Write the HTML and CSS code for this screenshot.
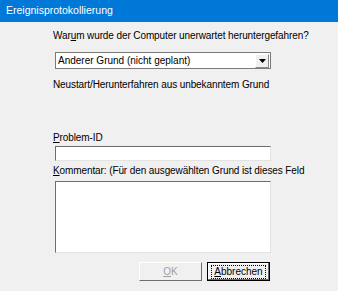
FILE: index.html
```html
<!DOCTYPE html>
<html lang="de">
<head>
    <meta charset="UTF-8">
    <title>Ereignisprotokollierung</title>
    <link rel="stylesheet" href="styles.css">
</head>
<body>
    <div class="window">
        <div class="titlebar">Ereignisprotokollierung</div>

        <div class="content">
            <div class="label question">War<u>u</u>m wurde der Computer unerwartet heruntergefahren?</div>

            <div class="combo">
                <span class="combo-text">Anderer Grund (nicht geplant)</span>
                <span class="combo-button">
                    <svg width="7" height="4" viewBox="0 0 7 4"><path d="M0 0h7L3.5 4z" fill="#000"/></svg>
                </span>
            </div>

            <div class="label info">Neustart/Herunterfahren aus unbekanntem Grund</div>

            <div class="label problem-label"><u>P</u>roblem-ID</div>
            <div class="field id-field"></div>

            <div class="label comment-label"><u>K</u>ommentar: (Für den ausgewählten Grund ist dieses Feld</div>
            <div class="field memo"></div>

            <div class="buttons">
                <div class="btn disabled"><u>O</u>K</div>
                <div class="btn default"><span class="focus"><u>A</u>bbrechen</span></div>
            </div>
        </div>
    </div>
</body>
</html>
```

FILE: styles.css
```css
body {
    margin: 0;
    background-color: #f0f0f0;
    font-family: "Liberation Sans", Arial, sans-serif;
    font-size: 10px;
    color: #000;
}
.window {
    width: 338px;
    height: 291px;
    overflow: hidden;
}
.titlebar {
    height: 22px;
    line-height: 21px;
    padding-left: 6px;
    background-color: #0078d7;
    color: #fff;
    font-size: 10.5px;
}
.content {
    padding: 7px 0 0 55px;
}
.label {
    line-height: 14px;
    white-space: nowrap;
    margin-left: -2px;
    letter-spacing: -0.1px;
}
.label u {
    text-decoration-thickness: 1px;
}
.combo {
    margin-top: 9px;
    width: 214px;
    height: 15px;
    border: 1px solid #7a7a7a;
    background-color: #fff;
    display: flex;
    align-items: center;
    justify-content: space-between;
}
.combo-text {
    padding-left: 2px;
}
.combo-button {
    width: 12px;
    height: 12px;
    margin-right: 1px;
    border: 1px solid;
    border-color: #fff #8a8a8a #8a8a8a #fff;
    background-color: #f0f0f0;
    display: flex;
    align-items: center;
    justify-content: center;
}
.info {
    margin-top: 9px;
}
.problem-label {
    margin-top: 40px;
    line-height: 12px;
}
.field {
    width: 214px;
    height: 13px;
    background-color: #fff;
    border: 1px solid;
    border-color: #6d6d6d #e3e3e3 #e3e3e3 #6d6d6d;
}
.id-field {
    margin-top: 2px;
}
.comment-label {
    margin-top: 3px;
}
.memo {
    margin-top: 3px;
    height: 70px;
}
.buttons {
    display: flex;
    gap: 5px;
    margin-top: 9px;
    margin-left: 84px;
}
.btn {
    width: 61px;
    height: 17px;
    border: 1px solid;
    border-color: #fff #6d6d6d #6d6d6d #fff;
    display: flex;
    align-items: center;
    justify-content: center;
    background-color: #f0f0f0;
}
.btn.disabled {
    color: #a0a0a0;
}
.btn.default {
    border: 1px solid #000;
    box-shadow: inset -1px -1px 0 #6d6d6d, inset 1px 1px 0 #fff;
}
.focus {
    padding: 0 2px;
    line-height: 12px;
    outline: 1px dotted #000;
}
```
